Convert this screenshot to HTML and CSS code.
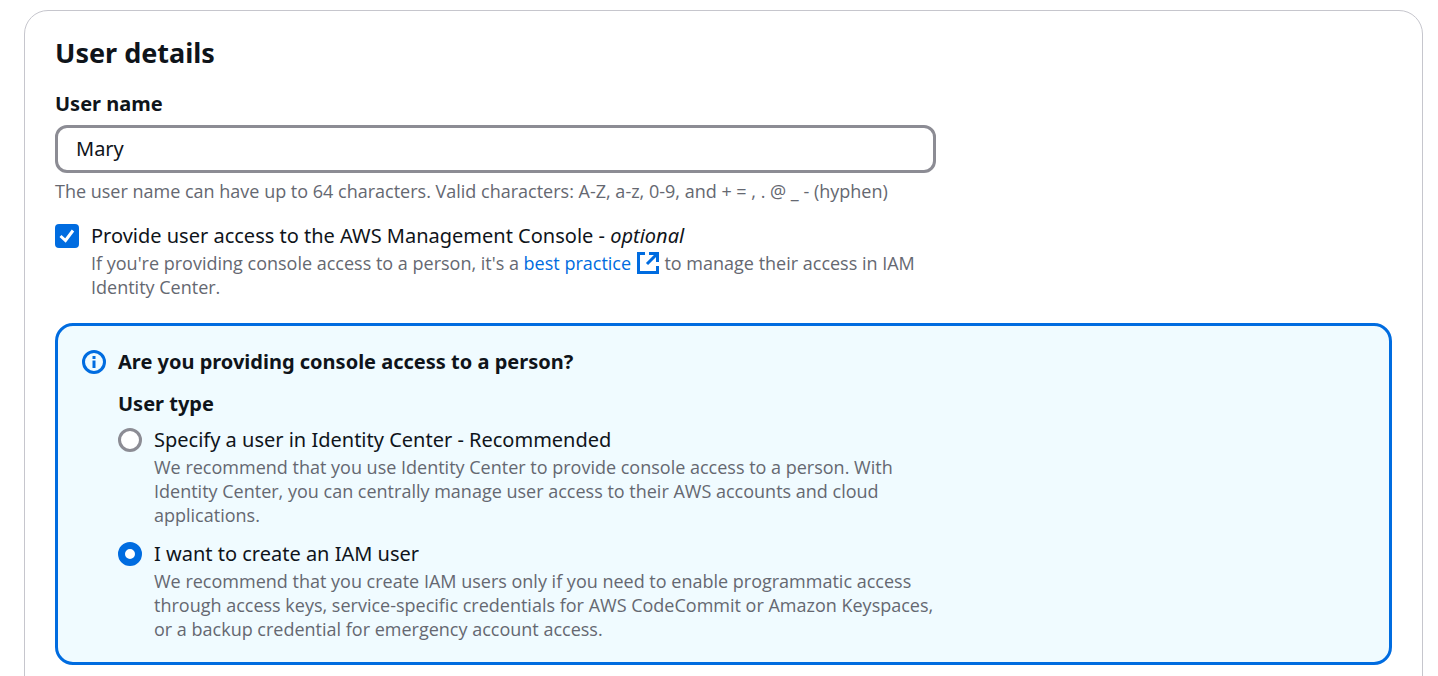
FILE: index.html
```html
<!DOCTYPE html>
<html lang="en">
<head>
<meta charset="utf-8">
<title>User details</title>
<link rel="stylesheet" href="styles.css">
</head>
<body>
<main class="panel">
  <h2 class="panel-title">User details</h2>
  <div class="field">
    <label class="field-label" for="user-name">User name</label>
    <input class="text-input" id="user-name" type="text" value="Mary" aria-describedby="name-hint">
    <p class="hint" id="name-hint">The user name can have up to 64 characters. Valid characters: A-Z, a-z, 0-9, and + = , . @ _ - (hyphen)</p>
  </div>
  <div class="choice access">
    <input class="check" type="checkbox" id="access" checked>
    <div class="choice-text">
      <label class="choice-label" for="access">Provide user access to the AWS Management Console - <em>optional</em></label>
      <p class="hint">If you're providing console access to a person, it's a <a class="link" href="#">best practice <svg class="external" viewBox="0 0 24 24" aria-hidden="true"><path d="M9 2.500H2.500V21.500H21.500V15M13 2.500H21.500V11M21.500 2.500L11 13"/></svg></a> to manage their access in IAM Identity Center.</p>
    </div>
  </div>
  <section class="alert">
    <svg class="info" viewBox="0 0 24 24" aria-hidden="true"><circle cx="12" cy="12" r="10.500"/><path d="M12 6v3M12 10.500V18"/></svg>
    <div class="alert-body">
      <h3 class="alert-title">Are you providing console access to a person?</h3>
      <fieldset class="group">
        <legend class="field-label">User type</legend>
        <div class="choice">
          <input class="radio" type="radio" name="type" id="center">
          <div class="choice-text">
            <label class="choice-label" for="center">Specify a user in Identity Center - Recommended</label>
            <p class="hint">We recommend that you use Identity Center to provide console access to a person. With Identity Center, you can centrally manage user access to their AWS accounts and cloud applications.</p>
          </div>
        </div>
        <div class="choice">
          <input class="radio" type="radio" name="type" id="iam" checked>
          <div class="choice-text">
            <label class="choice-label" for="iam">I want to create an IAM user</label>
            <p class="hint">We recommend that you create IAM users only if you need to enable programmatic access through access keys, service-specific credentials for AWS CodeCommit or Amazon Keyspaces, or a backup credential for emergency account access.</p>
          </div>
        </div>
      </fieldset>
    </div>
  </section>
</main>
</body>
</html>
```
FILE: styles.css
```css
* { box-sizing: border-box; }
body {
  margin: 0;
  padding: 10px 15px 0 24px;
  background: #fff;
  color: #0f141a;
  font-family: "Noto Sans", sans-serif;
  font-size: 20px;
  line-height: 30px;
}
h2, h3, p { margin: 0; }
.panel {
  border: 1px solid #c6c6cd;
  border-radius: 24px;
  padding: 24px 30px 36px;
}
.panel-title { font-size: 27px; line-height: 36px; }
.field { max-width: 881px; margin-top: 18px; }
.field-label { display: block; padding: 0; font-weight: 700; }
.text-input {
  display: block;
  width: 100%;
  height: 48px;
  margin: 6px 0;
  padding: 0 18px 2px;
  border: 3px solid #8c8c94;
  border-radius: 12px;
  background: #fff;
  color: inherit;
  font: inherit;
}
.hint { color: #656871; font-family: "Open Sans", sans-serif; font-size: 18px; line-height: 24px; }
.choice { display: flex; gap: 12px; max-width: 881px; }
.choice + .choice { margin-top: 12px; }
.choice-label { display: block; }
.access { margin-top: 18px; }
.check, .radio { appearance: none; flex: none; width: 24px; height: 24px; margin: 3px 0; }
.check {
  border-radius: 4px;
  background: #006ce0 url("data:image/svg+xml,%3Csvg xmlns='http://www.w3.org/2000/svg' viewBox='0 0 24 24'%3E%3Cpath d='M5.500 12l5 4.500L18 6.500' fill='none' stroke='white' stroke-width='3'/%3E%3C/svg%3E");
}
.radio { border: 3px solid #8c8c94; border-radius: 50%; background: #fff; }
.radio:checked { border: 7px solid #006ce0; }
.link { color: #006ce0; text-decoration: none; }
.external { width: 24px; height: 24px; vertical-align: bottom; fill: none; stroke: currentColor; stroke-width: 3; }
.alert {
  display: flex;
  gap: 12px;
  margin-top: 24px;
  padding: 21px 24px;
  border: 3px solid #006ce0;
  border-radius: 18px;
  background: #f0fbff;
}
.info { flex: none; width: 24px; height: 24px; margin-top: 3px; fill: none; stroke: #006ce0; stroke-width: 3; }
.alert-title { font-size: 20px; line-height: 30px; }
.alert-body { flex: 1; }
.group { margin: 12px 0 0; padding: 0; border: 0; }
.group .field-label { margin-bottom: 6px; }
.group .choice { max-width: 820px; }
```
